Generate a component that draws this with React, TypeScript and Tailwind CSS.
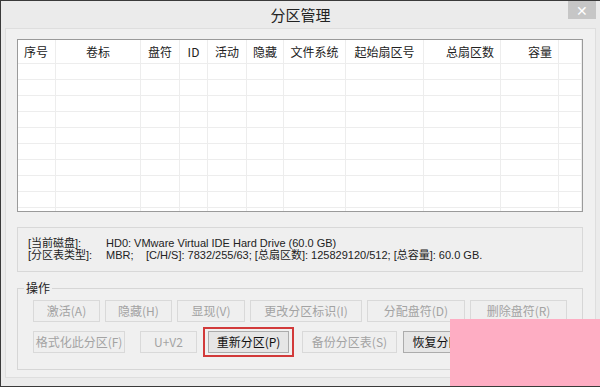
import React from 'react';

type Col = { label: string; width: number; align: 'left' | 'center' | 'right' };

const COLUMNS: Col[] = [
  { label: '序号', width: 38, align: 'left' },
  { label: '卷标', width: 85, align: 'center' },
  { label: '盘符', width: 39, align: 'center' },
  { label: 'ID', width: 28, align: 'center' },
  { label: '活动', width: 39, align: 'center' },
  { label: '隐藏', width: 37, align: 'center' },
  { label: '文件系统', width: 62, align: 'center' },
  { label: '起始扇区号', width: 78, align: 'center' },
  { label: '总扇区数', width: 77, align: 'right' },
  { label: '容量', width: 58, align: 'right' },
  { label: '', width: 23, align: 'left' },
];

const ALIGN: Record<Col['align'], string> = {
  left: 'justify-start pl-[6px]',
  center: 'justify-center',
  right: 'justify-end pr-[6px]',
};

const FONT = { fontFamily: '"Noto Sans CJK SC", "Liberation Sans", sans-serif' };
const INFO_FONT = { fontFamily: '"Liberation Sans", "Noto Sans CJK SC", sans-serif' };

function Btn({ label, width, enabled = false }: { label: string; width: number; enabled?: boolean }) {
  return (
    <div
      className={
        'flex h-[22px] shrink-0 items-center justify-center border text-[12px] ' +
        (enabled
          ? 'border-[#acacac] bg-[#e6e6e6] text-[#111]'
          : 'border-[#d9d9d9] bg-[#efefef] text-[#a3a3a3]')
      }
      style={{ width }}
    >
      {label}
    </div>
  );
}

function PartitionTable() {
  const rows = Array.from({ length: 10 });
  return (
    <div className="h-[173px] w-[566px] overflow-hidden border border-[#9a9a9a] bg-white">
      <div className="flex h-[23px]">
        {COLUMNS.map((c, i) => (
          <div
            key={i}
            className={'flex items-center border-r border-[#ededed] text-[12px] text-[#222] ' + ALIGN[c.align]}
            style={{ width: c.width }}
          >
            {c.label}
          </div>
        ))}
      </div>
      {rows.map((_, r) => (
        <div key={r} className="flex h-[16px] border-t border-[#ededed]">
          {COLUMNS.map((c, i) => (
            <div key={i} className="border-r border-[#ededed]" style={{ width: c.width }} />
          ))}
        </div>
      ))}
    </div>
  );
}

export default function App() {
  return (
    <div
      className="relative h-[387px] w-[600px] overflow-hidden border-t border-l border-b border-[#3a3a3a] bg-[#ebebeb]"
      style={FONT}
    >
      {/* title bar */}
      <div className="grid h-[27px] grid-cols-[1fr_auto_1fr] items-start">
        <div />
        <div className="pt-[3px] text-[15px] text-[#222]">分区管理</div>
        <div className="flex justify-end pr-[4px]">
          <div className="flex h-[18px] w-[28px] items-center justify-center bg-[#c6c6c6] text-[14px] leading-none text-white">
            ✕
          </div>
        </div>
      </div>

      {/* body */}
      <div className="mx-[4px] h-[350px] border border-[#dedede] bg-[#f0f0f0] px-[11px] pt-[10px]">
        <PartitionTable />

        <div
          className="mt-[15px] h-[45px] w-[566px] border border-[#d8d8d8] bg-[#efefef] pl-[10px] pt-[9px] text-[11px] leading-[12px] text-[#222]"
          style={INFO_FONT}
        >
          <div className="flex">
            <span className="w-[78px]">[当前磁盘]:</span>
            <span>HD0: VMware Virtual IDE Hard Drive (60.0 GB)</span>
          </div>
          <div className="flex">
            <span className="w-[78px]">[分区表类型]:</span>
            <span className="w-[40px]">MBR;</span>
            <span>[C/H/S]: 7832/255/63; [总扇区数]: 125829120/512; [总容量]: 60.0 GB.</span>
          </div>
        </div>

        <div className="relative mt-[16px] h-[82px] w-[566px] border border-[#d6d6d6] px-[15px] pt-[11px]">
          <div className="absolute -top-[10px] left-[6px] bg-[#f0f0f0] px-[2px] text-[12px] leading-[18px] text-[#222]">
            操作
          </div>
          <div className="flex gap-[5px]">
            <Btn label="激活(A)" width={67} />
            <Btn label="隐藏(H)" width={67} />
            <Btn label="显现(V)" width={68} />
            <Btn label="更改分区标识(I)" width={112} />
            <Btn label="分配盘符(D)" width={98} />
            <Btn label="删除盘符(R)" width={97} />
          </div>
          <div className="mt-[5px] flex items-center">
            <Btn label="格式化此分区(F)" width={92} />
            <div className="ml-[15px]">
              <Btn label="U+V2" width={57} />
            </div>
            <div className="ml-[6px] flex h-[30px] w-[91px] items-center justify-center border-2 border-[#d23a3a]">
              <Btn label="重新分区(P)" width={81} enabled />
            </div>
            <div className="ml-[8px]">
              <Btn label="备份分区表(S)" width={95} />
            </div>
            <div className="ml-[6px]">
              <Btn label="恢复分区表(B)" width={95} enabled />
            </div>
          </div>
        </div>
      </div>

      {/* watermark */}
      <div className="absolute left-[449px] top-[318px] h-[69px] w-[151px] bg-[#feadc3]" />
    </div>
  );
}
